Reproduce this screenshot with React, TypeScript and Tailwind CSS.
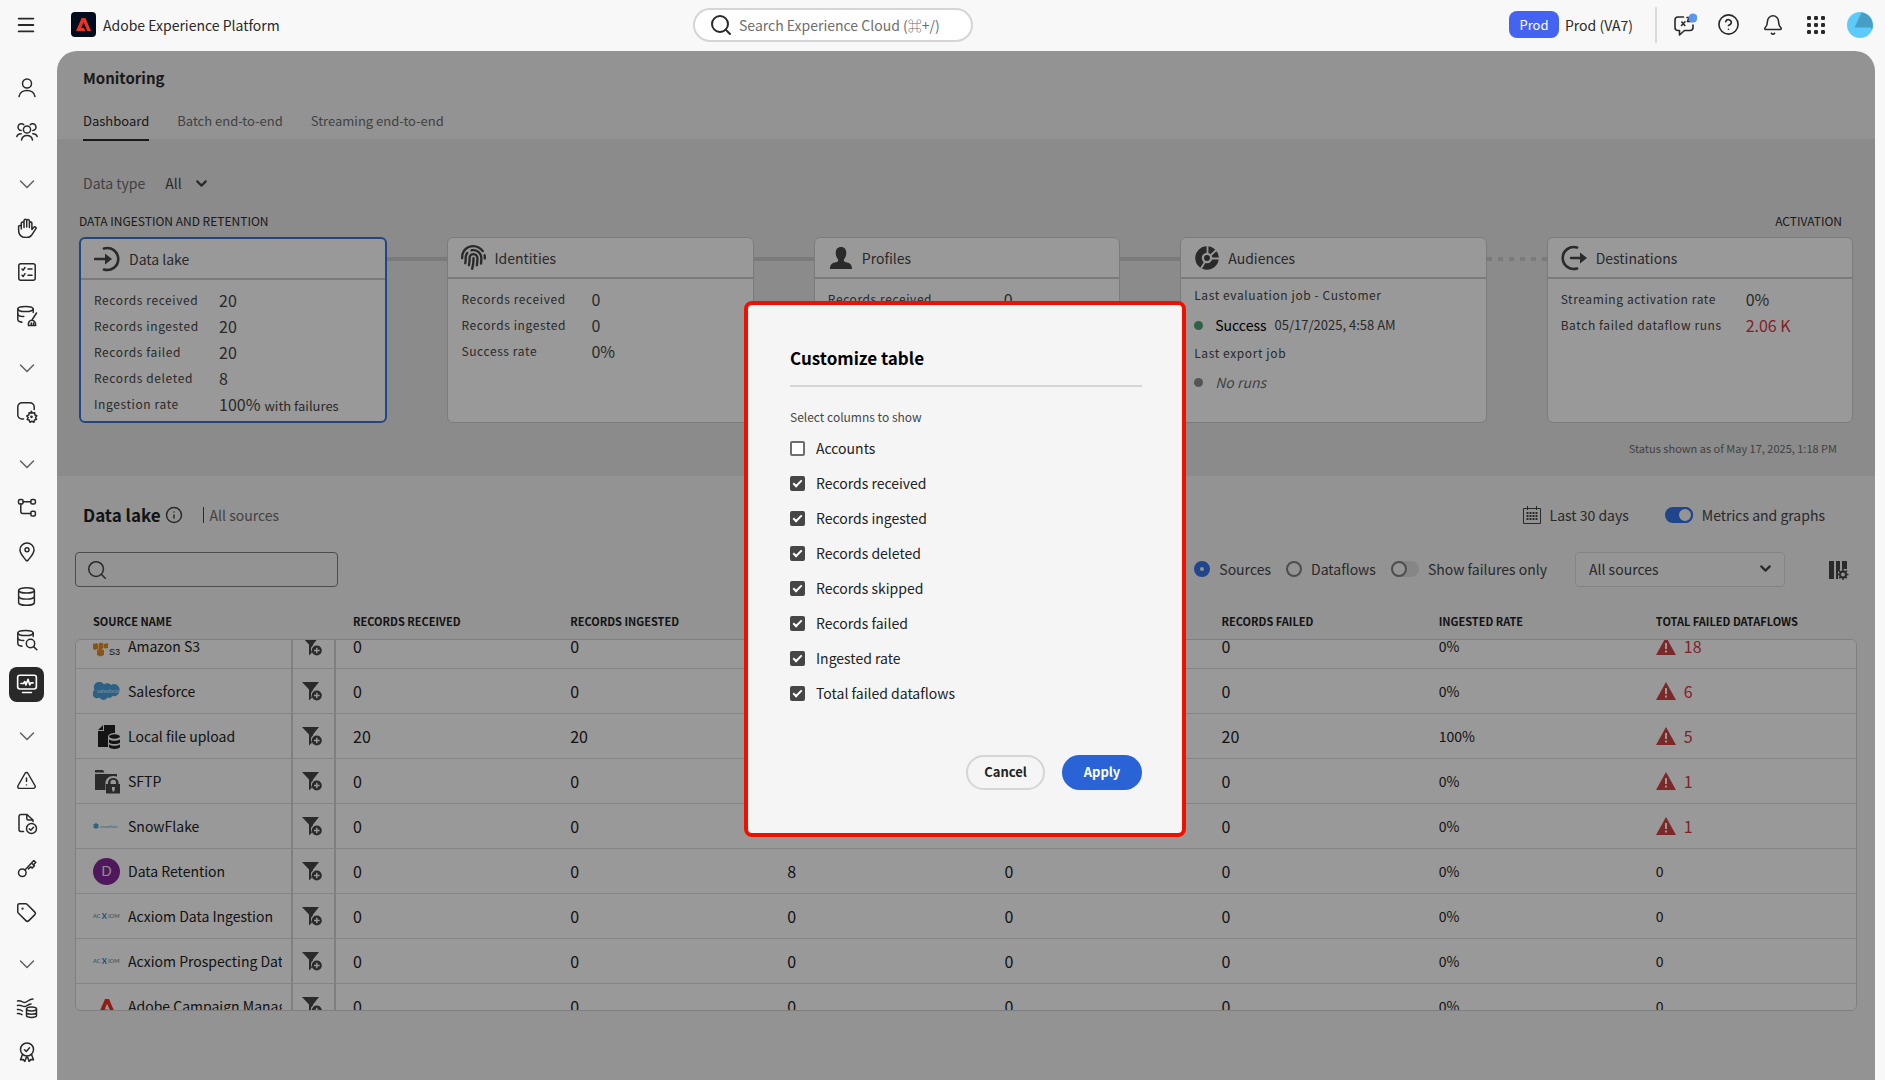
import { useState, type ReactNode } from "react";
import { Bell, ChevronDown, CircleHelp, Database, Info, Menu, Search, Tag, TriangleAlert } from "lucide-react";
import { FaFingerprint } from "react-icons/fa";

type Source = {
  name: string;
  logo: ReactNode;
  values: string[];
  rate: string;
  failed: number;
};

function Line({ children, size = 20 }: { children: ReactNode; size?: number }) {
  return (
    <svg
      width={size}
      height={size}
      viewBox="0 0 20 20"
      fill="none"
      stroke="currentColor"
      strokeWidth="1.5"
      strokeLinecap="round"
      strokeLinejoin="round"
      aria-hidden="true"
    >
      {children}
    </svg>
  );
}

// 22px icons with a small badge in the bottom right corner
function BadgeLine({ children }: { children: ReactNode }) {
  return (
    <svg
      width="22"
      height="22"
      viewBox="0 0 22 22"
      fill="none"
      stroke="currentColor"
      strokeWidth="1.5"
      strokeLinecap="round"
      strokeLinejoin="round"
      aria-hidden="true"
    >
      {children}
    </svg>
  );
}

const drum = (
  <>
    <ellipse cx="9.5" cy="4" rx="7.7" ry="2.6" />
    <path d="M1.8 4v10.5c0 1.3 1.8 2.3 4.2 2.7" />
    <path d="M1.8 9c0 1.4 2.6 2.5 6 2.6" />
    <path d="M17.2 4v3.5" />
  </>
);

const nav: { label: string; icon?: ReactNode; active?: boolean }[] = [
  {
    label: "Profiles",
    icon: (
      <Line>
        <circle cx="10" cy="5.5" r="4.5" />
        <path d="M2 18.5c.8-4 4-6 8-6s7.2 2 8 6" />
      </Line>
    ),
  },
  {
    label: "Audiences",
    icon: (
      <BadgeLine>
        <circle cx="11" cy="8.5" r="3.6" />
        <path d="M5.5 19c.6-3 2.6-4.5 5.5-4.5s4.9 1.5 5.5 4.5" />
        <path d="M5.2 9.5a3.4 3.4 0 1 1 2.600-5.800M16.800 9.500a3.400 3.400 0 1 0-2.600-5.800" />
        <path d="M.8 15.500c.7-1.900 2.200-2.800 4.400-2.800M21.200 15.500c-.7-1.900-2.200-2.800-4.400-2.800" />
      </BadgeLine>
    ),
  },
  { label: "Collapse privacy section" },
  {
    label: "Privacy",
    icon: (
      <Line>
        <path d="M4.300 11V5a1.400 1.400 0 0 1 2.700 0v4.500M7 9V2.400a1.400 1.400 0 0 1 2.700 0V9M9.700 8.500V2.600a1.400 1.400 0 0 1 2.700 0V9.500M12.400 5a1.300 1.300 0 0 1 2.500 0v6.500l2-2.200a1.200 1.200 0 0 1 1.900 1.500l-4.300 6.500c-1.200 1.700-2.800 2.300-5.100 2.300-5.100 0-7.800-2.600-7.800-7.600V9a1.300 1.300 0 0 1 2.700-.2" />
      </Line>
    ),
  },
  {
    label: "Requests",
    icon: (
      <Line>
        <rect x="1.800" y="1.800" width="16.400" height="16.400" rx="2" />
        <path d="m5 7 1.200 1.200L8 5.500M5 13.200l1.200 1.200L8 11.700M11 7h4M11 13.200h4" />
      </Line>
    ),
  },
  {
    label: "Data hygiene",
    icon: (
      <BadgeLine>
        {drum}
        <path d="M20.500 8l-4.500 7M12.500 20.500c-.6-3 1-5.300 3.300-5.300s4 2.200 3.900 5.300h-7.200M15.300 20v-2M17.500 20v-2" />
      </BadgeLine>
    ),
  },
  { label: "Collapse administration section" },
  {
    label: "Sandboxes",
    icon: (
      <BadgeLine>
        <path d="M7.500 18H6a4.200 4.200 0 0 1-4.200-4.200V6A4.200 4.200 0 0 1 6 1.800h8A4.200 4.200 0 0 1 18.200 6v2.500" />
        <path d="m15.200 10.300 1.300 1.800 2.200-.4.100 2.200 2 .9-1.300 1.700 1 1.900-2 .6-.6 2.200-2-.9-2 .9-.7-2.200-2-.5 1-2-1.400-1.600 2.100-1 .1-2.200 2.200.5z" />
        <circle cx="15.500" cy="15.800" r=".6" />
      </BadgeLine>
    ),
  },
  { label: "Collapse data section" },
  {
    label: "Sources",
    icon: (
      <Line>
        <rect x="1.500" y="1.500" width="4.600" height="4.600" rx="1.500" />
        <rect x="13.800" y="1.500" width="4.600" height="4.600" rx="1.500" />
        <rect x="13.800" y="13.300" width="4.600" height="4.600" rx="1.500" />
        <path d="M6.100 3.800h7.700M3.800 6.100v7.500a2 2 0 0 0 2 2h8" />
      </Line>
    ),
  },
  {
    label: "Destinations",
    icon: (
      <Line>
        <path d="M10 1a7 7 0 0 0-7 7c0 4 4 7.500 6 10.300a1.200 1.200 0 0 0 2 0C13 15.500 17 12 17 8a7 7 0 0 0-7-7z" />
        <circle cx="10" cy="7.800" r="2" />
      </Line>
    ),
  },
  { label: "Datasets", icon: <Database size={21} strokeWidth={1.7} /> },
  {
    label: "Queries",
    icon: (
      <BadgeLine>
        {drum}
        <circle cx="14.500" cy="14.500" r="4.200" />
        <path d="m17.600 17.600 3.200 3.200" />
      </BadgeLine>
    ),
  },
  {
    label: "Monitoring",
    active: true,
    icon: (
      <Line size={22}>
        <rect x="1.500" y="2" width="17" height="12.500" rx="2" />
        <path d="M6 17.700h8M4.500 9.500h2.200L8 7.800l1 3 2-5 1.500 5 1-1.800h2" />
      </Line>
    ),
  },
  { label: "Collapse quality section" },
  { label: "Alerts", icon: <TriangleAlert size={21} strokeWidth={1.7} /> },
  {
    label: "Audits",
    icon: (
      <BadgeLine>
        <path d="M7.500 18.500H5a2 2 0 0 1-2-2v-13a2 2 0 0 1 2-2h6L17 7v1.500M10.800 1.800V5.500A1.500 1.500 0 0 0 12.300 7H16.500" />
        <circle cx="15.500" cy="15.500" r="5" />
        <path d="m13.300 15.700 1.500 1.500 2.700-3" />
      </BadgeLine>
    ),
  },
  {
    label: "Encryption keys",
    icon: (
      <Line>
        <circle cx="5.300" cy="14.700" r="3.800" />
        <path d="m8 12 8.800-9.500 2 2-2.300 2.300 1 1-2.500 2.300-1.200-1.300-2.300 2.100M14.500 5l2 2" />
      </Line>
    ),
  },
  { label: "Tags", icon: <Tag size={21} strokeWidth={1.7} /> },
  { label: "Collapse usage section" },
  {
    label: "Data lineage",
    icon: (
      <BadgeLine>
        <path d="M1.500 4c3-1.500 4 1.500 7 1.500s4-3.500 8.500-3.500M1.500 8.500c3-1 4.500 1 7 1 2 0 3-2 6.500-2.500M1.500 12.500c2-.5 3.500.5 5 1.500M1.500 16.500c2-.5 3 .5 4.500 1.200" />
        <ellipse cx="15.500" cy="12" rx="5" ry="1.900" />
        <path d="M10.500 12v6.500c0 1 2.200 1.900 5 1.900s5-.9 5-1.900V12M10.500 15.300c0 1 2.200 1.900 5 1.900s5-.9 5-1.900" />
      </BadgeLine>
    ),
  },
  {
    label: "License usage",
    icon: (
      <Line>
        <circle cx="10" cy="7.500" r="6.500" />
        <path d="m7.500 7.700 1.800 1.800 3.200-3.800M5.500 12.500l-2 5.300 2.800-.3 1.500 2 1.700-4.500M14.500 12.500l2 5.300-2.800-.3-1.500 2-1.700-4.500" />
      </Line>
    ),
  },
];

const s3Logo = (
  <svg width="27" height="27" viewBox="0 0 27 27" aria-hidden="true">
    <g fill="#e58c22">
      <path d="M12 3h4v4h-4zM17 3h4v4h-4zM22 3h4v4h-4zM0 11l4-1 1 2v4l-3 1-2-1zM5.500 11l2-1.500 3 1v4.500l-3 2-2-1zM11 11l4-1v5l-3 .5-1-1zM4 17l3-1 4 1v5l-3.500 1.500L4 22z" />
    </g>
    <text x="16" y="22" fontSize="9" fill="#222" fontFamily="Liberation Sans, sans-serif">S3</text>
  </svg>
);

const salesforceLogo = (
  <svg width="27" height="19" viewBox="0 0 27 19" aria-hidden="true">
    <path fill="#4aa1dc" d="M11 2.500A5 5 0 0 1 18 3a5.500 5.500 0 0 1 8.500 5.500A5.500 5.500 0 0 1 19.500 14a4 4 0 0 1-5 1.500 4.500 4.500 0 0 1-8 0A4.500 4.500 0 0 1 1.500 8 5 5 0 0 1 11 2.500z" />
    <text x="4" y="10.500" fontSize="5" fontStyle="italic" fill="#d8ecf8" fontFamily="Liberation Sans, sans-serif">salesforce</text>
  </svg>
);

const fileLogo = (
  <svg width="27" height="27" viewBox="0 0 27 27" fill="#222" aria-hidden="true">
    <path d="M5 8h6V2h11v8c-4 0-7 1.500-7 4v10H5zM10 2v5H5z" />
    <ellipse cx="21.500" cy="13.500" rx="5.500" ry="2.200" />
    <path d="M16 16.500c3 1.800 8 1.800 11 0v3c-2 2-9 2-11 0zM16 21.500c3 1.800 8 1.800 11 0v2.800c-2 2.200-9 2.200-11 0z" />
  </svg>
);

const sftpLogo = (
  <svg width="27" height="27" viewBox="0 0 27 27" fill="#464646" aria-hidden="true">
    <path d="M2 2h8l1.500 2.500H2zM2 6h22v2.500c-7-2-12 2-11.500 7.500v6H2z" />
    <path fillRule="evenodd" d="M13 16h2v-1.500a5.300 5.300 0 0 1 10.500 0V16H27v9.500H13zM17.500 16h5.500v-1.500a2.700 2.700 0 0 0-5.500 0zM19 19v2l.6 2.500h1.600l.6-2.500v-2z" />
  </svg>
);

const snowflakeLogo = (
  <svg width="27" height="8" viewBox="0 0 27 8" aria-hidden="true">
    <path d="M3 1v6M.5 2.500l5 3M.5 5.500l5-3" stroke="#4da6d4" strokeWidth="1.500" />
    <text x="7" y="5.500" fontSize="4" fill="#4da6d4" fontFamily="Liberation Sans, sans-serif">snowflake</text>
  </svg>
);

const acxiomLogo = (
  <svg width="28" height="10" viewBox="0 0 28 10" aria-hidden="true">
    <text x="0" y="7" fontSize="6" fill="#5b7d9c" fontFamily="Lato, sans-serif">AC</text>
    <text x="9" y="8" fontSize="8" fontWeight="700" fill="#2f83c4" fontFamily="Lato, sans-serif">X</text>
    <text x="15.500" y="7" fontSize="6" fill="#5b7d9c" fontFamily="Lato, sans-serif">IOM</text>
  </svg>
);

function AdobeMark({ size }: { size: number }) {
  return (
    <svg width={size} height={size} viewBox="0 0 16 16" fill="#eb3323" aria-hidden="true">
      <path d="M6 1h4l6 14h-4L8.100 5.700 5.700 11.500h2.900L9.900 15H0z" />
    </svg>
  );
}

const none = ["0", "0", "0", "0", "0"];

const sources: Source[] = [
  { name: "Amazon S3", logo: s3Logo, values: none, rate: "0%", failed: 18 },
  { name: "Salesforce", logo: salesforceLogo, values: none, rate: "0%", failed: 6 },
  { name: "Local file upload", logo: fileLogo, values: ["20", "20", "0", "0", "20"], rate: "100%", failed: 5 },
  { name: "SFTP", logo: sftpLogo, values: none, rate: "0%", failed: 1 },
  { name: "SnowFlake", logo: snowflakeLogo, values: none, rate: "0%", failed: 1 },
  {
    name: "Data Retention",
    logo: (
      <span className="flex size-[27px] items-center justify-center rounded-full bg-[#852899] font-['Liberation_Sans',sans-serif] text-sm text-[#eeeeee]">
        D
      </span>
    ),
    values: ["0", "0", "8", "0", "0"],
    rate: "0%",
    failed: 0,
  },
  { name: "Acxiom Data Ingestion", logo: acxiomLogo, values: none, rate: "0%", failed: 0 },
  { name: "Acxiom Prospecting Data", logo: acxiomLogo, values: none, rate: "0%", failed: 0 },
  { name: "Adobe Campaign Managed", logo: <AdobeMark size={16} />, values: none, rate: "0%", failed: 0 },
];

const columns = [
  "Records received",
  "Records ingested",
  "Records deleted",
  "Records skipped",
  "Records failed",
  "Ingested rate",
  "Total failed dataflows",
];

function TopBar() {
  return (
    <header className="flex h-[51px] shrink-0 items-center pr-3 pb-0.5 text-[#292929]">
      <div className="flex w-[37%] shrink-0 items-center">
        <button type="button" aria-label="Menu" className="ml-[15px]">
          <Menu size={22} strokeWidth={2} />
        </button>
        <span className="ml-[34px] flex size-[25px] items-center justify-center rounded bg-[#000b1d]">
          <AdobeMark size={15} />
        </span>
        <span className="ml-[7px] text-sm">Adobe Experience Platform</span>
      </div>
      <label className="flex h-[34px] w-[280px] shrink-0 items-center gap-1.5 rounded-full border-2 border-[#d5d5d5] bg-white px-3.5">
        <Search size={24} strokeWidth={2} className="shrink-0" />
        <input
          type="search"
          aria-label="Search Experience Cloud"
          placeholder="Search Experience Cloud (⌘+/)"
          className="w-full min-w-0 bg-transparent text-sm outline-none placeholder:text-[#6e6e6e]"
        />
      </label>
      <div className="flex flex-1 items-center justify-end">
        <span className="flex h-[27px] w-[50px] items-center justify-center rounded-lg bg-[#4463f0] text-[13px] text-white">Prod</span>
        <span className="ml-1.5 text-sm">Prod (VA7)</span>
        <span className="ml-[22px] h-9 w-0.5 bg-[#dadada]" />
        <button type="button" aria-label="AI assistant" className="ml-4">
          <svg width="24" height="24" viewBox="0 0 24 24" fill="none" stroke="currentColor" strokeWidth="1.600" strokeLinecap="round" strokeLinejoin="round" aria-hidden="true">
            <path d="M10.500 4H5a3 3 0 0 0-3 3v7.500a3 3 0 0 0 3 3h1.500V22l5-4.500H17a3 3 0 0 0 3-3V12M14 4.500h2l-1.500 4h5" />
            <path d="m8.800 9 3 3.500M12 8.800 8.500 12.500" />
            <circle cx="20" cy="5" r="4.500" fill="#5c96f2" stroke="none" />
          </svg>
        </button>
        <button type="button" aria-label="Help" className="ml-5">
          <CircleHelp size={23} strokeWidth={1.7} />
        </button>
        <button type="button" aria-label="Notifications" className="ml-[22px]">
          <Bell size={22} strokeWidth={1.7} />
        </button>
        <button type="button" aria-label="Apps" className="ml-[22px]">
          <svg width="20" height="20" viewBox="0 0 20 20" fill="currentColor" aria-hidden="true">
            {[1, 8, 15].map((y) =>
              [1, 8, 15].map((x) => <rect key={`${x}-${y}`} x={x} y={y} width="4" height="4" rx="1.2" />),
            )}
          </svg>
        </button>
        <button type="button" aria-label="Account" className="ml-[21px]">
          <svg width="26" height="26" viewBox="0 0 26 26" aria-hidden="true">
            <circle cx="13" cy="13" r="13" fill="#5dcbf9" />
            <path d="M14.500.5A13 13 0 0 1 25 18c-.5-2-1-2.500-3-2.500H7.500z" fill="#479fc6" />
          </svg>
        </button>
      </div>
    </header>
  );
}

function SideNav() {
  return (
    <nav aria-label="Main" className="flex w-[57px] shrink-0 flex-col pt-[15px] text-[#292929]">
      {nav.map((item) =>
        item.icon ? (
          <a key={item.label} href="#" aria-label={item.label} className="flex h-11 w-[53px] items-center justify-center">
            {item.active ? (
              <span className="flex size-[35px] items-center justify-center rounded-lg bg-[#292929] text-white">{item.icon}</span>
            ) : (
              item.icon
            )}
          </a>
        ) : (
          <button
            key={item.label}
            type="button"
            aria-label={item.label}
            className="mt-2 flex h-11 w-[53px] items-center justify-center text-[#606060]"
          >
            <Line>
              <path d="m3.500 7 6.500 6.500L16.500 7" />
            </Line>
          </button>
        ),
      )}
    </nav>
  );
}

function Card({ title, icon, selected, children }: { title: string; icon: ReactNode; selected?: boolean; children: ReactNode }) {
  return (
    <section
      className={`h-[186px] min-w-0 flex-1 overflow-hidden rounded-md bg-white ${
        selected ? "border-2 border-[#3573ea]" : "border border-[#cdcdcd]"
      }`}
    >
      <h3 className="flex h-[41px] items-center gap-2 border-b-2 border-[#cdcdcd] px-[13px] text-sm">
        {icon}
        {title}
      </h3>
      {children}
    </section>
  );
}

function Metric({ label, value, width, tone, note }: { label: string; value: string; width: string; tone?: string; note?: string }) {
  return (
    <div className="flex h-[26px] items-center">
      <dt className={`shrink-0 text-xs tracking-wider ${width}`}>{label}</dt>
      <dd className={`text-base ${tone ?? ""}`}>
        {value}
        {note && <span className="ml-1 text-[13px]">{note}</span>}
      </dd>
    </div>
  );
}

const solid = "mt-5 h-1 w-[60px] shrink-0 bg-[#cbcbcb]";

function Pipeline() {
  return (
    <div className="flex">
      <Card
        selected
        title="Data lake"
        icon={
          <svg width="27" height="26" viewBox="0 0 27 26" fill="none" stroke="currentColor" strokeWidth="2.600" strokeLinecap="round" aria-hidden="true">
            <path d="M10 2.500a11 11 0 1 1 0 21M1 13h11" />
            <path d="M11 7.500l7 5.500-7 5.500z" fill="currentColor" stroke="none" />
          </svg>
        }
      >
        <dl className="px-[13px] pt-[7px]">
          <Metric width="w-[125px]" label="Records received" value="20" />
          <Metric width="w-[125px]" label="Records ingested" value="20" />
          <Metric width="w-[125px]" label="Records failed" value="20" />
          <Metric width="w-[125px]" label="Records deleted" value="8" />
          <Metric width="w-[125px]" label="Ingestion rate" value="100%" note="with failures" />
        </dl>
      </Card>
      <div className={solid} />
      <Card title="Identities" icon={<FaFingerprint size={25} />}>
        <dl className="px-[13px] pt-[7px]">
          <Metric width="w-[130px]" label="Records received" value="0" />
          <Metric width="w-[130px]" label="Records ingested" value="0" />
          <Metric width="w-[130px]" label="Success rate" value="0%" />
        </dl>
      </Card>
      <div className={solid} />
      <Card
        title="Profiles"
        icon={
          <svg width="26" height="24" viewBox="0 0 26 24" fill="currentColor" aria-hidden="true">
            <path d="M13 1c3.500 0 5.300 2.300 5.300 5.800 0 2.700-1 5-2.300 6.400-.5 1.800.2 2.500 1.500 2.900 4 1 6.500 2 6.500 6.900H2c0-4.900 2.500-5.900 6.500-6.900 1.300-.4 2-1.100 1.500-2.900C8.700 11.800 7.700 9.500 7.700 6.800 7.700 3.300 9.500 1 13 1z" />
          </svg>
        }
      >
        <dl className="px-[13px] pt-[7px]">
          <Metric width="w-[176px]" label="Records received" value="0" />
        </dl>
      </Card>
      <div className={solid} />
      <Card
        title="Audiences"
        icon={
          <svg width="26" height="26" viewBox="0 0 26 26" aria-hidden="true">
            <circle cx="13" cy="13" r="8.500" fill="none" stroke="currentColor" strokeWidth="6.500" />
            <circle cx="13" cy="13" r="3" fill="currentColor" />
            <path d="M13.500 8.500V0M16.500 10.500 24 3.500M17.500 13.500h9M11 17 6 25" stroke="white" strokeWidth="1.800" />
          </svg>
        }
      >
        <div className="px-[13px] pt-[3px] text-xs">
          <p className="flex h-[26px] items-center tracking-wider">Last evaluation job - Customer</p>
          <p className="flex h-[34px] items-center text-[13px]">
            <span className="mr-3 size-[9px] rounded-full bg-[#4ba56f]" />
            <span className="text-sm text-black">Success</span>
            <span className="ml-2">05/17/2025, 4:58 AM</span>
          </p>
          <p className="flex h-[22px] items-center tracking-wider">Last export job</p>
          <p className="flex h-9 items-center text-sm text-[#6e6e6e] italic">
            <span className="mr-3 size-[9px] rounded-full bg-[#8e8e8e]" />
            No runs
          </p>
        </div>
      </Card>
      <div className="mt-5 h-1 w-[60px] shrink-0 bg-[repeating-linear-gradient(90deg,#cbcbcb_0_5px,transparent_5px_11px)]" />
      <Card
        title="Destinations"
        icon={
          <svg width="27" height="26" viewBox="0 0 27 26" fill="none" stroke="currentColor" strokeWidth="2.600" strokeLinecap="round" aria-hidden="true">
            <path d="M16 2.500a11 11 0 1 0 0 21M10 13h11" />
            <path d="M19 7.500l7 5.500-7 5.500z" fill="currentColor" stroke="none" />
          </svg>
        }
      >
        <dl className="px-[13px] pt-[7px]">
          <Metric width="w-[185px]" label="Streaming activation rate" value="0%" />
          <Metric width="w-[185px]" label="Batch failed dataflow runs" value="2.06 K" tone="text-[#d7373f]" />
        </dl>
      </Card>
    </div>
  );
}

function Toggle({ label, defaultChecked }: { label: string; defaultChecked?: boolean }) {
  return (
    <label className="flex items-center gap-[9px] text-sm">
      <input
        type="checkbox"
        role="switch"
        defaultChecked={defaultChecked}
        className="h-4 w-7 appearance-none rounded-full bg-[#e0e0e0] before:block before:size-4 before:rounded-full before:border-2 before:border-[#808080] before:bg-[#f8f8f8] checked:bg-[#3573ea] checked:before:ml-3 checked:before:border-[#3573ea]"
      />
      {label}
    </label>
  );
}

function ViewRadio({ label, defaultChecked }: { label: string; defaultChecked?: boolean }) {
  return (
    <label className="flex items-center gap-[9px] text-sm">
      <input
        type="radio"
        name="view"
        defaultChecked={defaultChecked}
        className="size-4 appearance-none rounded-full border-2 border-[#808080] bg-[#f5f5f5] checked:border-6 checked:border-[#3573ea]"
      />
      {label}
    </label>
  );
}

function SourceRow({ source }: { source: Source }) {
  return (
    <tr className="flex h-[45px] border-b border-[#dcdcdc] bg-white first:-mt-4">
      <td className="flex w-[217px] shrink-0 items-center border-r-2 border-[#d4d4d4] pr-[9px] pl-[17px]">
        <span className="flex w-[27px] shrink-0 items-center justify-center">{source.logo}</span>
        <span className="ml-2 overflow-hidden whitespace-nowrap">{source.name}</span>
      </td>
      <td className="flex w-[43px] shrink-0 items-center border-r-2 border-[#d4d4d4] pl-[9px]">
        <button type="button" aria-label={`Filter by ${source.name}`} className="text-[#464646]">
          <svg width="20" height="20" viewBox="0 0 20 20" aria-hidden="true">
            <path d="M0 1h17l-6 7.500v1c-2.500 1.500-2.500 4.500-1 7l-3 3V8.500z" fill="currentColor" />
            <circle cx="14.800" cy="14.500" r="5" fill="currentColor" />
            <path d="M14.800 11.700v5.600M12 14.500h5.600" stroke="white" strokeWidth="1.400" />
          </svg>
        </button>
      </td>
      {source.values.map((v, i) => (
        <td key={i} className="flex flex-1 items-center pl-[17px] text-base">
          {v}
        </td>
      ))}
      <td className="flex flex-1 items-center pl-[17px]">{source.rate}</td>
      <td className="flex flex-1 items-center pl-[17px]">
        {source.failed > 0 ? (
          <span className="flex items-center gap-2 text-base text-[#d7373f]">
            <svg width="20" height="18" viewBox="0 0 20 18" aria-hidden="true">
              <path d="M10 0 20 18H0z" fill="#d04244" />
              <path d="M10 6v6M10 13.500v2" stroke="white" strokeWidth="2" />
            </svg>
            {source.failed}
          </span>
        ) : (
          "0"
        )}
      </td>
    </tr>
  );
}

function CustomizeDialog() {
  const [shown, setShown] = useState<string[]>(columns);

  const toggle = (name: string) =>
    setShown((prev) => (prev.includes(name) ? prev.filter((c) => c !== name) : [...prev, name]));

  return (
    <div
      role="dialog"
      aria-modal="true"
      aria-labelledby="customize-title"
      className="w-[442px] rounded-lg border-4 border-[#f01000] bg-[#f5f5f5] pt-[41px] pr-10 pb-[43px] pl-[42px] text-sm text-[#222222]"
    >
      <h2 id="customize-title" className="border-b-2 border-[#d5d5d5] pb-[15px] text-[17px] leading-6 font-bold text-black">
        Customize table
      </h2>
      <fieldset className="pt-[22px]">
        <legend className="sr-only">Columns</legend>
        <p className="text-xs leading-4 text-[#464646]">Select columns to show</p>
        <div className="mt-1.5">
          {["Accounts", ...columns].map((name) => (
            <label key={name} className="flex h-[35px] items-center gap-[11px]">
              <input
                type="checkbox"
                checked={shown.includes(name)}
                onChange={() => toggle(name)}
                className="flex size-[15px] appearance-none justify-center rounded-xs border-2 border-[#6e6e6e] bg-white before:h-[9px] before:w-[5px] before:rotate-45 before:border-white checked:border-[#464646] checked:bg-[#464646] checked:before:border-r-2 checked:before:border-b-2"
              />
              {name}
            </label>
          ))}
        </div>
      </fieldset>
      <div className="mt-11 flex justify-end gap-[17px]">
        <button type="button" className="h-[35px] w-[79px] rounded-full border-2 border-[#d5d5d5] text-[13px] font-bold">
          Cancel
        </button>
        <button type="button" className="h-[35px] w-20 rounded-full bg-[#2963d6] text-[13px] font-bold text-white">
          Apply
        </button>
      </div>
    </div>
  );
}

export default function App() {
  return (
    <div className="flex h-screen flex-col overflow-hidden bg-[#f8f8f8] font-['Noto_Sans_CJK_SC',sans-serif]">
      <TopBar />
      <div className="flex min-h-0 flex-1 pr-2.5">
        <SideNav />
        <main className="relative min-w-0 flex-1 overflow-hidden rounded-t-[20px] bg-[#f5f5f5] text-sm text-[#464646]">
          <div className="h-[88px] px-[26px] pt-[15px]">
            <h1 className="text-[15px] leading-6 font-bold text-[#2c2c2c]">Monitoring</h1>
            <div role="tablist" className="mt-[17px] flex gap-7 text-[13px] text-[#6e6e6e]">
              <button type="button" role="tab" aria-selected="true" className="h-[34px] border-b-2 border-[#2c2c2c] pb-1 text-[#2c2c2c]">
                Dashboard
              </button>
              <button type="button" role="tab" aria-selected="false" className="h-[34px] pb-1.5">
                Batch end-to-end
              </button>
              <button type="button" role="tab" aria-selected="false" className="h-[34px] pb-1.5">
                Streaming end-to-end
              </button>
            </div>
          </div>

          <div className="h-[337px] bg-[#e8e8e8] px-[22px] pt-8">
            <div className="flex items-center px-1 leading-6">
              <span className="text-[#6e6e6e]">Data type</span>
              <button type="button" className="ml-5 flex items-center gap-[11px]">
                All
                <ChevronDown size={17} strokeWidth={3} />
              </button>
            </div>
            <div className="mt-4 mb-1.5 flex justify-between pr-[11px] text-xs leading-5 text-[#2c2c2c]">
              <h2>DATA INGESTION AND RETENTION</h2>
              <h2>ACTIVATION</h2>
            </div>
            <Pipeline />
            <p className="mt-[15px] pr-4 text-right text-[11px] leading-5 text-[#6e6e6e]">Status shown as of May 17, 2025, 1:18 PM</p>
          </div>

          <div className="px-[18px] pt-[25px]">
            <div className="flex items-center pr-8 pl-2 leading-7">
              <h2 className="text-[17px] leading-7 font-bold text-[#222222]">Data lake</h2>
              <Info size={18} className="ml-1" />
              <span className="ml-5 h-4 w-px bg-[#464646]" />
              <span className="ml-1.5 text-[#6e6e6e]">All sources</span>
              <button type="button" className="ml-auto flex items-center gap-[9px]">
                <svg width="18" height="18" viewBox="0 0 18 18" fill="none" stroke="currentColor" aria-hidden="true">
                  <path d="M.5 2.500h17v15H.5zM4.500 0v4M13.500 0v4" />
                  <path d="M3.500 7h11M3.500 10h11M3.500 13h11" strokeWidth="2" strokeDasharray="2 1" />
                </svg>
                Last 30 days
              </button>
              <div className="ml-9">
                <Toggle label="Metrics and graphs" defaultChecked />
              </div>
            </div>

            <div className="mt-[23px] flex h-[35px] items-center pr-2">
              <label className="flex h-[35px] w-[263px] items-center rounded border border-[#808080] px-2.5">
                <Search size={22} strokeWidth={1.7} className="shrink-0" />
                <input type="search" aria-label="Search sources" className="w-full min-w-0 bg-transparent px-2 outline-none" />
              </label>
              <div className="ml-auto flex items-center gap-[15px] pb-0.5">
                <ViewRadio label="Sources" defaultChecked />
                <ViewRadio label="Dataflows" />
                <Toggle label="Show failures only" />
              </div>
              <div className="relative ml-7">
                <select
                  aria-label="Source filter"
                  className="h-[35px] w-[210px] appearance-none rounded border border-[#dcdcdc] bg-[#f8f8f8] px-[13px] pb-0.5 text-sm"
                >
                  <option>All sources</option>
                </select>
                <ChevronDown size={17} strokeWidth={3} className="pointer-events-none absolute top-2 right-[11px]" />
              </div>
              <button type="button" aria-label="Customize table" className="ml-11">
                <svg width="20" height="20" viewBox="0 0 20 20" fill="currentColor" aria-hidden="true">
                  <path d="M0 1h5v18H0zM7 1h4v8.500L9 12v7H7zM13 1h5v8h-5z" />
                  <circle cx="14" cy="14.500" r="3" fill="none" stroke="currentColor" strokeWidth="2" />
                  <path d="M14 9v11M8.500 14.500h11M10 10.500l8 8M18 10.500l-8 8" stroke="currentColor" strokeWidth="1.500" strokeDasharray="2 7" />
                </svg>
              </button>
            </div>

            <table className="mt-[22px] block text-[#222222]">
              <thead className="block">
                <tr className="flex h-[30px] px-px text-left text-[11px] leading-6">
                  <th className="w-[217px] shrink-0 pl-[17px] font-bold">SOURCE NAME</th>
                  <th className="w-[43px] shrink-0" aria-label="Filter" />
                  {columns.map((c) => (
                    <th key={c} className="flex-1 pl-[17px] font-bold uppercase">
                      {c}
                    </th>
                  ))}
                </tr>
              </thead>
              <tbody className="block h-[372px] overflow-hidden rounded-md border border-[#d4d4d4]">
                {sources.map((s) => (
                  <SourceRow key={s.name} source={s} />
                ))}
              </tbody>
            </table>
          </div>

          <div className="absolute inset-0 flex items-center justify-center bg-black/40 pt-1.5 pr-0.5">
            <CustomizeDialog />
          </div>
        </main>
      </div>
    </div>
  );
}
